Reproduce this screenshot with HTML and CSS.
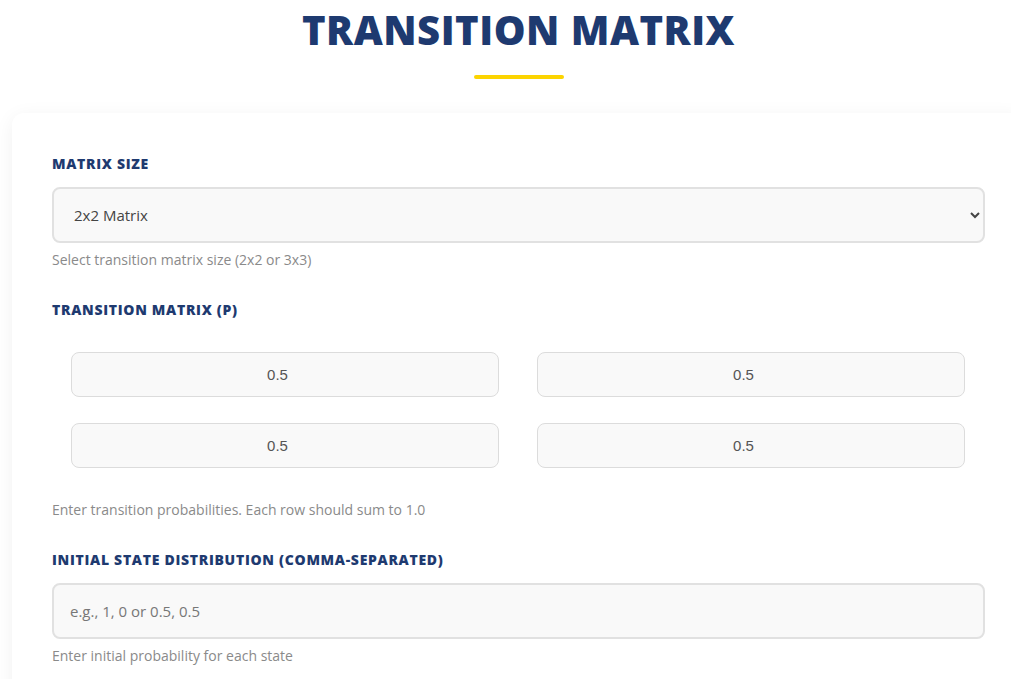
FILE: index.html
```html
<!DOCTYPE html>
<html lang="en">
<head>
  <meta charset="UTF-8">
  <meta name="viewport" content="width=device-width, initial-scale=1.0">
  <title>Transition Matrix</title>
  <link rel="stylesheet" href="styles.css">
</head>
<body>
  <div class="page">
    <header class="page-header">
      <h1>TRANSITION MATRIX</h1>
      <div class="title-bar"></div>
    </header>

    <div class="card">
      <div class="form-group">
        <label for="matrixSize">MATRIX SIZE</label>
        <select id="matrixSize">
          <option value="2">2x2 Matrix</option>
          <option value="3">3x3 Matrix</option>
        </select>
        <small class="help">Select transition matrix size (2x2 or 3x3)</small>
      </div>

      <div class="form-group">
        <label>TRANSITION MATRIX (P)</label>
        <div class="matrix-grid">
          <input type="number" class="cell" value="0.5">
          <input type="number" class="cell" value="0.5">
          <input type="number" class="cell" value="0.5">
          <input type="number" class="cell" value="0.5">
        </div>
        <small class="help help-matrix">Enter transition probabilities. Each row should sum to 1.0</small>
      </div>

      <div class="form-group">
        <label for="initialState">INITIAL STATE DISTRIBUTION (COMMA-SEPARATED)</label>
        <input type="text" id="initialState" class="text-input" placeholder="e.g., 1, 0 or 0.5, 0.5">
        <small class="help">Enter initial probability for each state</small>
      </div>
    </div>
  </div>
</body>
</html>
```

FILE: styles.css
```css
html, body {
  overflow-x: hidden;
}

body {
  margin: 0;
  background: #ffffff;
  font-family: 'Open Sans', sans-serif;
  color: #444;
}

.page {
  width: 1013px;
  margin-left: 12px;
}

.page-header {
  display: flex;
  flex-direction: column;
  align-items: center;
}

h1 {
  margin: 0;
  font-family: 'Open Sans', sans-serif;
  font-weight: 800;
  font-size: 40px;
  line-height: 60px;
  letter-spacing: 0.5px;
  color: #1e3a70;
}

.title-bar {
  width: 90px;
  height: 4px;
  margin-top: 15px;
  border-radius: 2px;
  background: #fcd400;
}

.card {
  margin-top: 34px;
  background: white;
  border-radius: 12px;
  box-shadow: 0 4px 20px rgba(0, 0, 0, 0.06);
  padding: 41px 40px 30px;
}

.form-group {
  display: flex;
  flex-direction: column;
  margin-bottom: 30px;
}

label {
  font-size: 14px;
  line-height: 20px;
  font-weight: 800;
  letter-spacing: 0.7px;
  color: #1e3a70;
  margin-bottom: 13px;
}

select, .text-input {
  height: 56px;
  box-sizing: border-box;
  border: 2px solid #e1e1e1;
  border-radius: 8px;
  background-color: #f9f9f9;
  padding: 0 16px;
  font-family: 'Open Sans', sans-serif;
  font-size: 15px;
  color: #444;
}

select {
  padding-right: 10px;
}

.text-input::placeholder {
  color: #777;
}

.help {
  margin-top: 7px;
  font-size: 14px;
  line-height: 20px;
  color: #8a8a8a;
}

.help-matrix {
  margin-top: 12px;
}

.matrix-grid {
  display: grid;
  grid-template-columns: 1fr 1fr;
  gap: 26px 38px;
  padding: 19px 20px 20px 19px;
}

.cell {
  height: 45px;
  box-sizing: border-box;
  border: 1px solid #dcdcdc;
  border-radius: 8px;
  background: #f9f9f9;
  text-align: center;
  font-family: 'Liberation Sans', Arial, sans-serif;
  font-size: 15px;
  color: #555;
}
```
